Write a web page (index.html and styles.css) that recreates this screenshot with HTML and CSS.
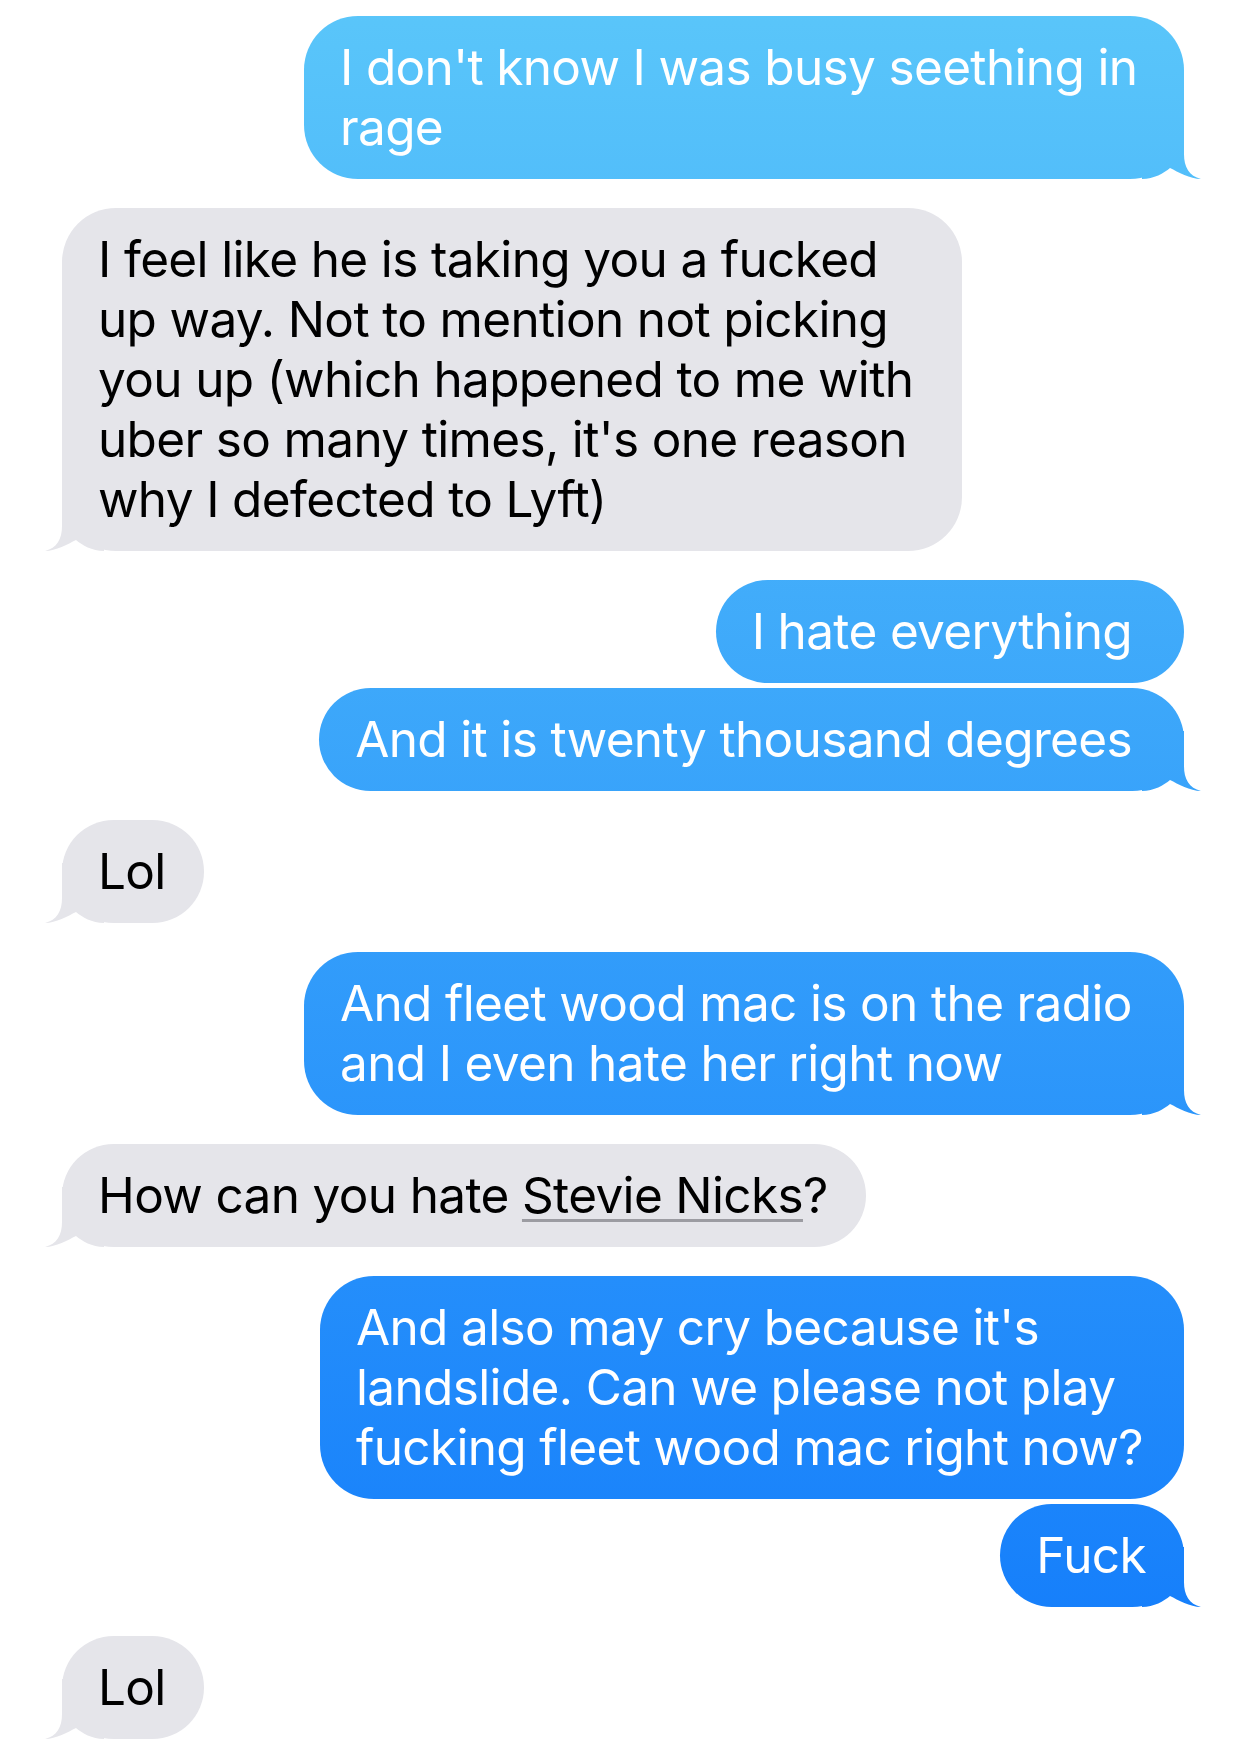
FILE: index.html
```html
<!DOCTYPE html>
<html lang="en">
<head>
    <meta charset="UTF-8">
    <meta name="viewport" content="width=device-width, initial-scale=1.0">
    <title>Messages</title>
    <link rel="stylesheet" href="styles.css">
</head>
<body>
    <div class="thread">
        <div class="msg sent tail">I don't know I was busy seething in rage</div>

        <div class="msg received tail next">I feel like he is taking you a fucked up way. Not to mention not picking you up (which happened to me with uber so many times, it's one reason why I defected to Lyft)</div>

        <div class="msg sent wide next">I hate everything</div>
        <div class="msg sent wide tail">And it is twenty thousand degrees</div>

        <div class="msg received tail next">Lol</div>

        <div class="msg sent tail next">And fleet wood mac is on the radio and I even hate her right now</div>

        <div class="msg received tail next">How can you hate <span class="link">Stevie Nicks</span>?</div>

        <div class="msg sent narrow next">And also may cry because it's landslide. Can we please not play fucking fleet wood mac right now?</div>
        <div class="msg sent tail">Fuck</div>

        <div class="msg received tail next">Lol</div>
    </div>
</body>
</html>
```

FILE: styles.css
```css
body {
    margin: 0;
    background-color: #ffffff;
    font-family: Inter, "Noto Sans", sans-serif;
}
.thread {
    display: flex;
    flex-direction: column;
    gap: 5px;
    padding: 16px 58px 20px 62px;
}
.msg {
    position: relative;
    z-index: 0;
    padding: 21px 38px 22px 36px;
    font-size: 49.5px;
    line-height: 60px;
    letter-spacing: -0.65px;
    border-radius: 54px;
}
.msg.next {
    margin-top: 24px;
}
.msg.wide {
    padding-right: 52px;
}
.sent {
    align-self: flex-end;
    max-width: 806px;
    color: #ffffff;
    background: linear-gradient(#5ac6fa, #1079fb) fixed;
}
.sent.narrow {
    max-width: 790px;
}
.received {
    align-self: flex-start;
    max-width: 826px;
    color: #000000;
    background-color: #e5e5ea;
}

/* bubble tails */
.tail::before {
    content: "";
    position: absolute;
    z-index: -1;
    bottom: 0;
    width: 60px;
    height: 60px;
    clip-path: path("M 42 0 L 42 35 C 42 48, 47 57, 59 60 C 48 60, 36 53, 28 49 C 22 54, 12 60, 0 60 L 0 0 Z");
}
.sent.tail::before {
    right: -18px;
    background: linear-gradient(#5ac6fa, #1079fb) fixed;
}
.received.tail::before {
    left: -18px;
    background-color: #e5e5ea;
    transform: scaleX(-1);
}

.link {
    text-decoration: underline;
    text-decoration-color: #9c9ca2;
    text-decoration-thickness: 3px;
    text-underline-offset: 6px;
}
```
